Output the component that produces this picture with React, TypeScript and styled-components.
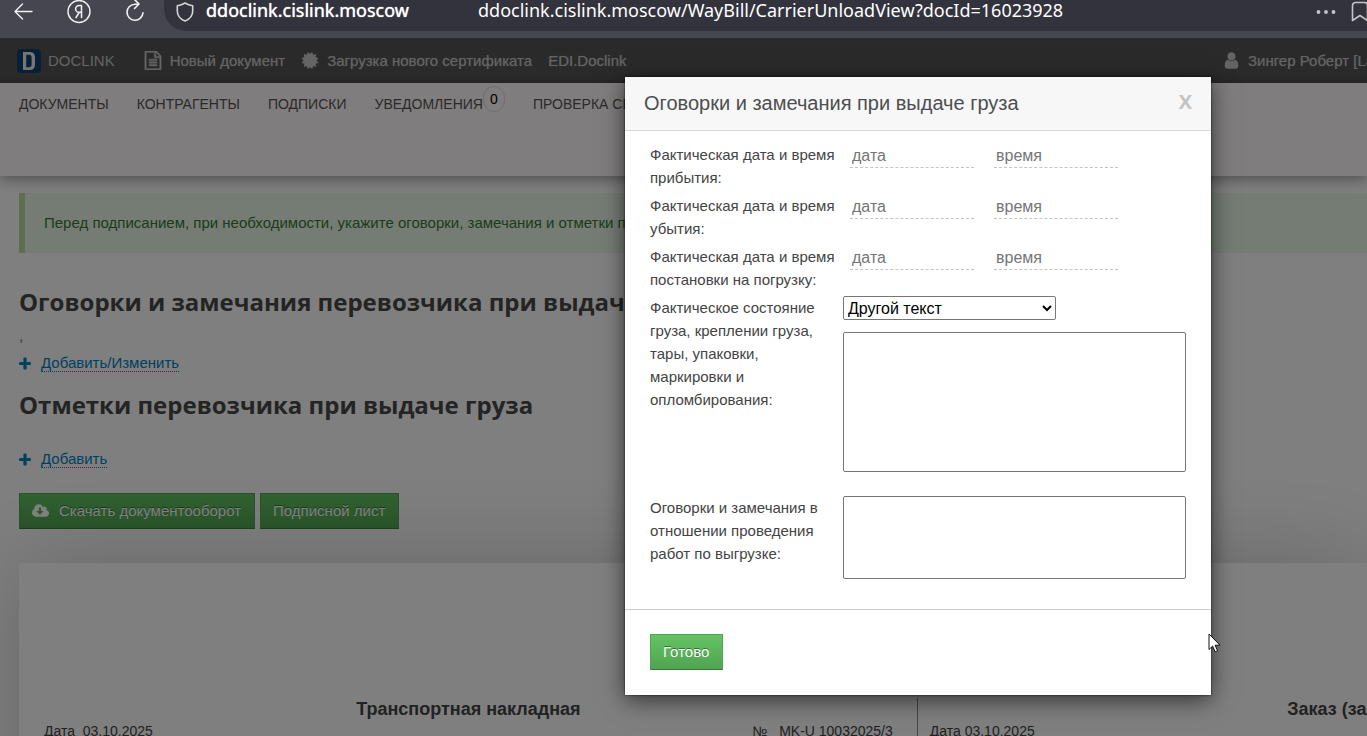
import React from "react";
import styled, { createGlobalStyle } from "styled-components";

const GlobalStyle = createGlobalStyle`
  *, *::before, *::after { box-sizing: border-box; }
  html, body { margin: 0; padding: 0; }
  body {
    font-family: "Liberation Sans", Arial, sans-serif;
    font-size: 15px;
    line-height: 23px;
    color: #444;
    background: #fff;
    overflow: hidden;
  }
  button, input, select, textarea { font-family: inherit; }
  svg { flex: none; }
`;

const Screen = styled.div`
  display: flex;
  flex-direction: column;
  height: 100vh;
  overflow: hidden;
`;

/* ---------- browser bar ---------- */

const BrowserBar = styled.div`
  display: flex;
  flex: none;
  height: 38px;
  background: #464650;
  color: #f2f2f4;
`;

const BrowserButtons = styled.div`
  display: flex;
  align-items: center;
  justify-content: space-between;
  flex: none;
  width: 164px;
  height: 24px;
  padding: 0 19px 0 13px;
`;

const ChromeButton = styled.button`
  display: flex;
  padding: 0;
  border: 0;
  background: none;
  color: inherit;
`;

const AddressBar = styled.div`
  display: flex;
  flex: 1;
  align-items: center;
  min-width: 0;
  height: 31px;
  padding: 0 0 8px 12px;
  border-bottom-left-radius: 22px;
  background: #33333d;
  font-family: "Noto Sans", "Open Sans", sans-serif;
  font-size: 18px;
  line-height: 22px;
  white-space: nowrap;
  color: #fff;
`;

const Host = styled.span`
  width: 272px;
  margin-left: 12px;
  padding-bottom: 4px;
  text-shadow: 0 0 1px #fff;
`;

const Url = styled.span`
  flex: 1;
  padding-bottom: 4px;
`;

const AddressActions = styled.div`
  display: flex;
  align-items: center;
  gap: 15px;
  margin-right: -8px;
  color: #c4c4ca;
`;

/* ---------- site ---------- */

const Viewport = styled.div`
  position: relative;
  flex: 1;
  min-height: 0;
  overflow: hidden;
`;

const TopBar = styled.header`
  display: flex;
  align-items: center;
  height: 45px;
  padding-left: 17px;
  background: #555;
  color: #c8c8c8;
  white-space: nowrap;
  overflow: hidden;
`;

const TopLink = styled.a`
  display: flex;
  align-items: center;
  gap: 8px;
  margin-right: 16px;
  color: inherit;
  text-decoration: none;
  text-shadow: 0 0 1px #999;
`;

const BrandLink = styled(TopLink)`
  gap: 7px;
  margin-right: 29px;
  text-shadow: none;
`;

const UserLink = styled(TopLink)`
  width: 144px;
  margin: 0 0 0 auto;
`;

const SiteHeader = styled.nav`
  position: relative;
  display: flex;
  align-items: flex-start;
  gap: 28px;
  height: 93px;
  padding: 10px 0 0 19px;
  background: #fffbfb;
  box-shadow: 0 3px 14px rgba(0, 0, 0, 0.4);
  white-space: nowrap;
`;

const NavLink = styled.a<{ $badge?: boolean }>`
  position: relative;
  margin-right: ${(p) => (p.$badge ? 22 : 0)}px;
  font-size: 14px;
  color: #555;
  text-decoration: none;
`;

const CountBadge = styled.span`
  position: absolute;
  top: -7px;
  left: 100%;
  width: 22px;
  height: 26px;
  border: 1px solid #dedede;
  border-radius: 11px;
  font-size: 14px;
  line-height: 24px;
  text-align: center;
  color: #000;
`;

const Content = styled.main`
  padding: 17px 0 0 19px;
`;

const Notice = styled.p`
  margin: 0 0 33px;
  padding: 18px 19px 19px;
  border-left: 6px solid #bcdca2;
  background: #ebf9e8;
  color: #3c763d;
  white-space: nowrap;
  overflow: hidden;
`;

const SectionTitle = styled.h2`
  margin: 0;
  font-family: "Open Sans", "Noto Sans", sans-serif;
  font-size: 24px;
  font-weight: 700;
  line-height: 32px;
  color: #484848;
  white-space: nowrap;
`;

const Remark = styled.p`
  margin: 6px 0 7px;
  color: #8a6d3b;
`;

const ActionRow = styled.div<{ $top?: number; $bottom: number }>`
  display: flex;
  align-items: center;
  gap: 10px;
  margin: ${(p) => p.$top ?? 0}px 0 ${(p) => p.$bottom}px;
  color: #0082bd;
`;

const DottedLink = styled.a`
  border-bottom: 1px dotted #0082bd;
  line-height: 17px;
  color: inherit;
  text-decoration: none;
`;

const ButtonRow = styled.div`
  display: flex;
  gap: 5px;
`;

const GreenButton = styled.button`
  display: flex;
  align-items: center;
  gap: 10px;
  height: 36px;
  padding: 0 13px 1px 12px;
  border: 1px solid #52a552;
  border-bottom-color: #367a36;
  background: linear-gradient(#62c462, #51a351);
  font-size: 15px;
  color: #fff;
  text-shadow: 0 -1px 0 rgba(0, 0, 0, 0.4);
`;

const Sheets = styled.div`
  display: flex;
  height: 400px;
  margin-top: 34px;
  padding-top: 135px;
  background: #fff;
  box-shadow: 0 0 90px rgba(0, 0, 0, 0.2);
`;

const Sheet = styled.section<{ $divided?: boolean }>`
  flex: none;
  width: 66.6%;
  padding: ${(p) => (p.$divided ? "0 44px 0 12px" : "0 24px 0 25px")};
  border-left: ${(p) => (p.$divided ? "1px solid #888" : "0")};
`;

const SheetTitle = styled.h3`
  margin: 0;
  font-size: 18px;
  line-height: 22px;
  text-align: center;
  color: #444;
`;

const SheetLine = styled.div`
  display: flex;
  justify-content: space-between;
  font-size: 14px;
  white-space: pre;
`;

/* ---------- dialog ---------- */

const Backdrop = styled.div`
  position: absolute;
  inset: 0;
  background: rgba(0, 0, 0, 0.5);
`;

const Dialog = styled.div`
  position: absolute;
  top: 39px;
  right: 156px;
  width: 586px;
  background: #fff;
  color: #444;
  box-shadow: 0 0 2px rgba(0, 0, 0, 0.8), 0 5px 22px rgba(0, 0, 0, 0.6);
`;

const DialogHeader = styled.div`
  display: flex;
  align-items: center;
  justify-content: space-between;
  height: 54px;
  padding: 0 19px;
  border-bottom: 1px solid #d9d9d9;
  background: #f7f7f7;
`;

const DialogTitle = styled.h1`
  margin: 0;
  font-size: 20px;
  font-weight: 400;
  color: #4c4f50;
`;

const CloseButton = styled.button`
  padding: 0 0 4px;
  border: 0;
  background: none;
  font-family: "Open Sans", sans-serif;
  font-size: 20px;
  font-weight: 700;
  color: #c4c4c4;
`;

const DialogBody = styled.div`
  padding: 12px 25px 30px;
`;

const FieldRow = styled.div<{ $gap?: number }>`
  display: grid;
  grid-template-columns: 193px 1fr;
  margin-bottom: ${(p) => p.$gap ?? 5}px;
`;

const FieldLabel = styled.label`
  padding-right: 5px;
`;

const InputPair = styled.div`
  display: flex;
  align-items: flex-start;
  gap: 20px;
  padding-left: 7px;
`;

const DashedInput = styled.input`
  width: 124px;
  height: 25px;
  padding: 1px 2px 0;
  border: 0;
  border-bottom: 1px dashed #c4c4c4;
  background: none;
  font-size: 16px;
  outline: none;
  &::placeholder { color: #757575; }
`;

const FieldStack = styled.div`
  display: flex;
  flex-direction: column;
  align-items: flex-start;
  gap: 12px;
`;

const Select = styled.select`
  width: 213px;
  height: 24px;
  border: 1px solid #767676;
  border-radius: 2px;
  background: #fff;
  font-size: 16px;
  color: #000;
`;

const TextArea = styled.textarea<{ $height: number }>`
  display: block;
  width: 100%;
  height: ${(p) => p.$height}px;
  border: 1px solid #767676;
  border-radius: 2px;
  background: #fff;
  resize: none;
`;

const DialogFooter = styled.div`
  padding: 24px 25px 25px;
  border-top: 1px solid #ccc;
`;

const Pointer = styled.svg`
  position: absolute;
  top: 595px;
  right: 146px;
`;

/* ---------- icons ---------- */

type GlyphProps = { d: string; w: number; size: number; box?: number; bold?: boolean };

const Glyph = ({ d, w, size, box, bold }: GlyphProps) => (
  <svg
    width={box ?? Math.round((w * size) / 1792)}
    height={size}
    viewBox={`0 0 ${w} 1792`}
    fill="currentColor"
    stroke={bold ? "currentColor" : "none"}
    strokeWidth={50}
    aria-hidden="true"
  >
    <path d={d} />
  </svg>
);

const FILE =
  "M1468 380q28 28 48 76t20 88v1152q0 40-28 68t-68 28h-1344q-40 0-68-28t-28-68v-1600q0-40 28-68t68-28h896q40 0 88 20t76 48zm-444-244v376h376q-10-29-22-41l-313-313q-12-12-41-22zm384 1528v-1024h-416q-40 0-68-28t-28-68v-416h-768v1536h1280zm-1024-864q0-14 9-23t23-9h704q14 0 23 9t9 23v64q0 14-9 23t-23 9h-704q-14 0-23-9t-9-23v-64zm736 224q14 0 23 9t9 23v64q0 14-9 23t-23 9h-704q-14 0-23-9t-9-23v-64q0-14 9-23t23-9h704zm0 256q14 0 23 9t9 23v64q0 14-9 23t-23 9h-704q-14 0-23-9t-9-23v-64q0-14 9-23t23-9h704z";
const CERTIFICATE =
  "M1376 896l138 135q30 28 20 70-12 41-52 51l-188 48 53 186q12 41-19 70-29 31-70 19l-186-53-48 188q-10 40-51 52-12 2-19 2-31 0-51-22l-135-138-135 138q-28 30-70 20-41-11-51-52l-48-188-186 53q-41 12-70-19-31-29-19-70l53-186-188-48q-40-10-52-51-10-42 20-70l138-135-138-135q-30-28-20-70 12-41 52-51l188-48-53-186q-12-41 19-70 29-31 70-19l186 53 48-188q10-41 51-51 41-12 70 19l135 139 135-139q29-30 70-19 41 10 51 51l48 188 186-53q41-12 70 19 31 29 19 70l-53 186 188 48q40 10 52 51 10 42-20 70z";
const USER =
  "M1280 1399q0 109-62.5 187t-150.5 78h-854q-88 0-150.5-78t-62.5-187q0-85 8.5-160.5t31.5-152 58.5-131 94-89 134.5-34.5q131 128 313 128t313-128q76 0 134.5 34.5t94 89 58.5 131 31.5 152 8.5 160.5zm-256-887q0 159-112.5 271.5t-271.5 112.5-271.5-112.5-112.5-271.5 112.5-271.5 271.5-112.5 271.5 112.5 112.5 271.5z";
const CLOUD =
  "M1280 928q0-14-9-23t-23-9h-224v-352q0-13-9.5-22.5t-22.5-9.5h-192q-13 0-22.5 9.5t-9.5 22.5v352h-224q-13 0-22.5 9.5t-9.5 22.5q0 14 9 23l352 352q9 9 23 9t23-9l351-351q10-12 10-24zm640 224q0 159-112.5 271.5t-271.5 112.5h-1088q-185 0-316.5-131.5t-131.5-316.5q0-130 70-240t188-165q-2-30-2-43 0-212 150-362t362-150q156 0 285.5 87t188.5 231q71-62 166-62 106 0 181 75t75 181q0 76-41 138 130 31 213.5 135.5t83.5 238.5z";
const PLUS =
  "M1408 800v192q0 40-28 68t-68 28h-416v416q0 40-28 68t-68 28h-192q-40 0-68-28t-28-68v-416h-416q-40 0-68-28t-28-68v-192q0-40 28-68t68-28h416v-416q0-40 28-68t68-28h192q40 0 68 28t28 68v416h416q40 0 68 28t28 68z";

const Stroke = {
  fill: "none",
  stroke: "currentColor",
  strokeWidth: 1.4,
  strokeLinecap: "round" as const,
  strokeLinejoin: "round" as const,
};

const BackIcon = () => (
  <svg width="20" height="24" viewBox="0 0 20 24" {...Stroke}>
    <path d="M19 11.5H2M9.500 4L2 11.500L9.500 19" />
  </svg>
);

const YandexIcon = () => (
  <svg width="24" height="24" viewBox="0 0 24 24" {...Stroke}>
    <circle cx="12" cy="11.500" r="11" />
    <path d="M14.500 5.500v12M14.500 5.500h-2.500a3.400 3.400 0 0 0 0 6.800h2.500M12.200 12.500L9 17.500" strokeWidth="1.500" />
  </svg>
);

const ReloadIcon = () => (
  <svg width="20" height="24" viewBox="0 0 20 24" {...Stroke} strokeWidth="1.600">
    <path d="M13 4.200H10a8 8 0 1 0 8 8.500M9 -1L14 4L9.500 8.500" />
  </svg>
);

const ShieldIcon = () => (
  <svg width="18" height="20" viewBox="0 0 18 20" {...Stroke} stroke="#d4d4d8" strokeWidth="1.600">
    <path d="M9 1C6.500 2.500 4 3.300 1.300 3.700V9c0 5 3.200 8.200 7.700 10 4.500-1.800 7.700-5 7.700-10V3.700C14 3.300 11.500 2.500 9 1z" />
  </svg>
);

const MoreIcon = () => (
  <svg width="20" height="20" viewBox="0 0 20 20" fill="currentColor">
    <circle cx="2.500" cy="10" r="1.900" />
    <circle cx="10" cy="10" r="1.900" />
    <circle cx="17.500" cy="10" r="1.900" />
  </svg>
);

const BookmarkIcon = () => (
  <svg width="24" height="22" viewBox="0 0 24 22" {...Stroke} strokeWidth="1.600">
    <path d="M1.500 19.500V4.500a3 3 0 0 1 3-3h9a3 3 0 0 1 3 3v15l-7.500-5z" />
  </svg>
);

const LogoIcon = () => (
  <svg width="24" height="24" viewBox="0 0 24 24" aria-hidden="true">
    <rect width="24" height="24" rx="4" fill="#11406c" />
    <path
      d="M6 3h6.500c4 0 5.500 2 5.500 6v6c0 4-1.500 6-5.500 6H6zM9.200 5.800v12.400h2.800c2 0 2.600-.9 2.600-3.200V9c0-2.300-.6-3.200-2.600-3.200z"
      fill="#ececec"
      fillRule="evenodd"
    />
  </svg>
);

const dateFields = [
  { id: "arrival", label: "Фактическая дата и время прибытия:" },
  { id: "departure", label: "Фактическая дата и время убытия:" },
  { id: "loading", label: "Фактическая дата и время постановки на погрузку:" },
];

export default function App() {
  return (
    <Screen>
      <GlobalStyle />
      <BrowserBar>
        <BrowserButtons>
          <ChromeButton aria-label="Назад"><BackIcon /></ChromeButton>
          <ChromeButton aria-label="Яндекс"><YandexIcon /></ChromeButton>
          <ChromeButton aria-label="Обновить"><ReloadIcon /></ChromeButton>
        </BrowserButtons>
        <AddressBar>
          <ShieldIcon />
          <Host>ddoclink.cislink.moscow</Host>
          <Url>ddoclink.cislink.moscow/WayBill/CarrierUnloadView?docId=16023928</Url>
          <AddressActions>
            <MoreIcon />
            <BookmarkIcon />
          </AddressActions>
        </AddressBar>
      </BrowserBar>

      <Viewport>
        <TopBar>
          <BrandLink href="#">
            <LogoIcon />
            DOCLINK
          </BrandLink>
          <TopLink href="#">
            <Glyph d={FILE} w={1536} size={19} box={18} bold />
            Новый документ
          </TopLink>
          <TopLink href="#">
            <Glyph d={CERTIFICATE} w={1536} size={19} box={18} />
            Загрузка нового сертификата
          </TopLink>
          <TopLink href="#">EDI.Doclink</TopLink>
          <UserLink href="#">
            <Glyph d={USER} w={1280} size={19} box={17} />
            Зингер Роберт [Lab]
          </UserLink>
        </TopBar>

        <SiteHeader>
          <NavLink href="#">ДОКУМЕНТЫ</NavLink>
          <NavLink href="#">КОНТРАГЕНТЫ</NavLink>
          <NavLink href="#">ПОДПИСКИ</NavLink>
          <NavLink href="#" $badge>
            УВЕДОМЛЕНИЯ
            <CountBadge>0</CountBadge>
          </NavLink>
          <NavLink href="#">ПРОВЕРКА СЕРТИФИКАТА</NavLink>
        </SiteHeader>

        <Content>
          <Notice>
            Перед подписанием, при необходимости, укажите оговорки, замечания и отметки перевозчика
          </Notice>
          <SectionTitle>Оговорки и замечания перевозчика при выдаче груза</SectionTitle>
          <Remark>,</Remark>
          <ActionRow $bottom={17}>
            <Glyph d={PLUS} w={1408} size={15} />
            <DottedLink href="#">Добавить/Изменить</DottedLink>
          </ActionRow>
          <SectionTitle>Отметки перевозчика при выдаче груза</SectionTitle>
          <ActionRow $top={29} $bottom={25}>
            <Glyph d={PLUS} w={1408} size={15} />
            <DottedLink href="#">Добавить</DottedLink>
          </ActionRow>
          <ButtonRow>
            <GreenButton>
              <Glyph d={CLOUD} w={1920} size={16} />
              Скачать документооборот
            </GreenButton>
            <GreenButton>Подписной лист</GreenButton>
          </ButtonRow>
          <Sheets>
            <Sheet>
              <SheetTitle>Транспортная накладная</SheetTitle>
              <SheetLine>
                <span>Дата  03.10.2025</span>
                <span>№   MK-U 10032025/3</span>
              </SheetLine>
            </Sheet>
            <Sheet $divided>
              <SheetTitle>Заказ (заявка)</SheetTitle>
              <SheetLine>
                <span>Дата 03.10.2025</span>
              </SheetLine>
            </Sheet>
          </Sheets>
        </Content>

        <Backdrop />

        <Dialog role="dialog" aria-labelledby="dialog-title">
          <DialogHeader>
            <DialogTitle id="dialog-title">Оговорки и замечания при выдаче груза</DialogTitle>
            <CloseButton aria-label="Закрыть">X</CloseButton>
          </DialogHeader>
          <DialogBody>
            {dateFields.map((f) => (
              <FieldRow key={f.id}>
                <FieldLabel htmlFor={f.id}>{f.label}</FieldLabel>
                <InputPair>
                  <DashedInput id={f.id} placeholder="дата" />
                  <DashedInput aria-label={f.label} placeholder="время" />
                </InputPair>
              </FieldRow>
            ))}
            <FieldRow $gap={24}>
              <FieldLabel htmlFor="state">
                Фактическое состояние груза, креплении груза, тары, упаковки, маркировки и опломбирования:
              </FieldLabel>
              <FieldStack>
                <Select id="state">
                  <option>Другой текст</option>
                </Select>
                <TextArea $height={140} aria-label="Фактическое состояние" />
              </FieldStack>
            </FieldRow>
            <FieldRow $gap={0}>
              <FieldLabel htmlFor="remarks">
                Оговорки и замечания в отношении проведения работ по выгрузке:
              </FieldLabel>
              <TextArea id="remarks" $height={83} />
            </FieldRow>
          </DialogBody>
          <DialogFooter>
            <GreenButton>Готово</GreenButton>
          </DialogFooter>
        </Dialog>

        <Pointer width="13" height="20" viewBox="0 0 13 20" aria-hidden="true">
          <path
            d="M1 1v15.500l3.600-3.400 2.600 5.700 2.400-1-2.500-5.600H12z"
            fill="#fff"
            stroke="#111"
            strokeWidth="1"
          />
        </Pointer>
      </Viewport>
    </Screen>
  );
}
